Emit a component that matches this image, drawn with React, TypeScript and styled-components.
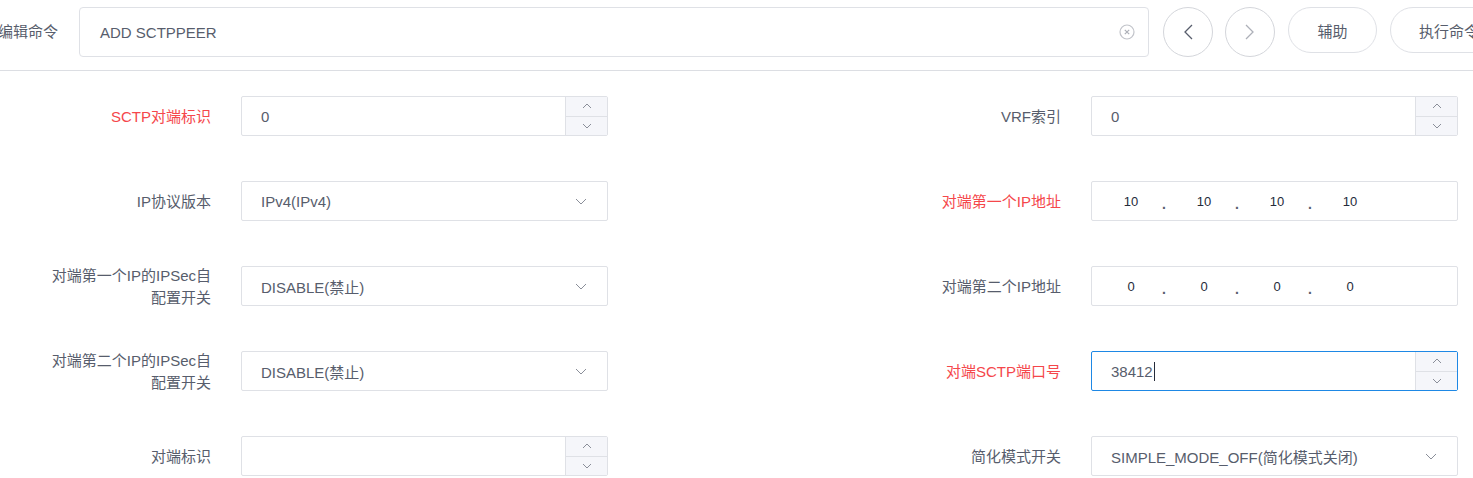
import React from 'react';
import styled, { createGlobalStyle } from 'styled-components';

const GlobalStyle = createGlobalStyle`
  body {
    margin: 0;
    background: #ffffff;
    font-family: "Liberation Sans", "Noto Sans CJK SC", sans-serif;
    color: #575d6c;
  }
`;

type FieldKind = 'number' | 'select' | 'ip';

interface FieldDef {
  label: string;
  required?: boolean;
  kind: FieldKind;
  value?: string;
  focused?: boolean;
}

const leftFields: FieldDef[] = [
  { label: 'SCTP对端标识', required: true, kind: 'number', value: '0' },
  { label: 'IP协议版本', kind: 'select', value: 'IPv4(IPv4)' },
  { label: '对端第一个IP的IPSec自配置开关', kind: 'select', value: 'DISABLE(禁止)' },
  { label: '对端第二个IP的IPSec自配置开关', kind: 'select', value: 'DISABLE(禁止)' },
  { label: '对端标识', kind: 'number', value: '' },
];

const rightFields: FieldDef[] = [
  { label: 'VRF索引', kind: 'number', value: '0' },
  { label: '对端第一个IP地址', required: true, kind: 'ip', value: '10.10.10.10' },
  { label: '对端第二个IP地址', kind: 'ip', value: '0.0.0.0' },
  { label: '对端SCTP端口号', required: true, kind: 'number', value: '38412', focused: true },
  { label: '简化模式开关', kind: 'select', value: 'SIMPLE_MODE_OFF(简化模式关闭)' },
];

const ChevronDown = () => (
  <svg width="12" height="7" viewBox="0 0 12 7" fill="none">
    <path d="M1 1L6 6L11 1" stroke="#8a8e99" strokeWidth="1" />
  </svg>
);

const SpinArrow = ({ up }: { up?: boolean }) => (
  <svg width="10" height="6" viewBox="0 0 10 6" fill="none">
    <path d={up ? 'M1 5L5 1L9 5' : 'M1 1L5 5L9 1'} stroke="#8a8e99" strokeWidth="1" />
  </svg>
);

const NavArrow = ({ left, color }: { left?: boolean; color: string }) => (
  <svg width="10" height="16" viewBox="0 0 10 16" fill="none">
    <path d={left ? 'M9 1L2 8L9 15' : 'M1 1L8 8L1 15'} stroke={color} strokeWidth="1.3" />
  </svg>
);

const ClearIcon = () => (
  <svg width="16" height="16" viewBox="0 0 16 16" fill="none">
    <circle cx="8" cy="8" r="7" stroke="#c2c4ca" strokeWidth="1.2" />
    <path d="M5.8 5.8L10.2 10.2M10.2 5.8L5.8 10.2" stroke="#adb0b8" strokeWidth="1.2" />
  </svg>
);

function renderControl(field: FieldDef) {
  if (field.kind === 'select') {
    return (
      <SelectBox>
        <ControlText>{field.value}</ControlText>
        <ChevronDown />
      </SelectBox>
    );
  }
  if (field.kind === 'ip') {
    const parts = (field.value || '').split('.');
    return (
      <IpBox>
        {parts.map((part, i) => (
          <React.Fragment key={i}>
            <Octet>{part}</Octet>
            {i < parts.length - 1 && <IpDot>.</IpDot>}
          </React.Fragment>
        ))}
      </IpBox>
    );
  }
  return (
    <NumberBox $focused={field.focused}>
      <ControlText>
        {field.value}
        {field.focused && <Caret />}
      </ControlText>
      <Spinner>
        <SpinButton>
          <SpinArrow up />
        </SpinButton>
        <SpinButton $lower>
          <SpinArrow />
        </SpinButton>
      </Spinner>
    </NumberBox>
  );
}

const App = () => (
  <>
    <GlobalStyle />
    <Page>
      <CommandBar>
        <BarLabel>编辑命令</BarLabel>
        <CommandInput>
          <CommandText>ADD SCTPPEER</CommandText>
          <ClearIcon />
        </CommandInput>
        <CircleButton type="button">
          <NavArrow left color="#575d6c" />
        </CircleButton>
        <CircleButton type="button">
          <NavArrow color="#adb0b8" />
        </CircleButton>
        <PillButton type="button" $width={89}>
          辅助
        </PillButton>
        <PillButton type="button" $width={118}>
          执行命令
        </PillButton>
      </CommandBar>
      <Form>
        {leftFields.map((field, i) => [field, rightFields[i]]).flat().map((field) => (
          <Field key={field.label}>
            <Label $required={field.required}>{field.label}</Label>
            {renderControl(field)}
          </Field>
        ))}
      </Form>
    </Page>
  </>
);

const Page = styled.div`
  width: 1473px;
  height: 478px;
  overflow: hidden;
`;

const CommandBar = styled.div`
  display: flex;
  align-items: flex-start;
  height: 63px;
  padding-top: 7px;
  margin-left: -2px;
  border-bottom: 1px solid #dcdee3;
`;

const BarLabel = styled.div`
  flex-shrink: 0;
  width: 60px;
  margin-right: 21px;
  font-size: 15px;
  line-height: 50px;
  color: #575d6c;
  white-space: nowrap;
`;

const CommandInput = styled.div`
  flex-shrink: 0;
  display: flex;
  align-items: center;
  width: 1070px;
  height: 50px;
  box-sizing: border-box;
  padding: 0 13px 0 20px;
  margin-right: 14px;
  border: 1px solid #dfe1e6;
  border-radius: 4px;
`;

const CommandText = styled.span`
  flex: 1;
  font-size: 15px;
  color: #575d6c;
`;

const CircleButton = styled.button`
  flex-shrink: 0;
  display: flex;
  align-items: center;
  justify-content: center;
  width: 50px;
  height: 50px;
  margin-right: 12px;
  padding: 0;
  border: 1px solid #d4d6db;
  border-radius: 50%;
  background: #ffffff;
`;

const PillButton = styled.button<{ $width: number }>`
  flex-shrink: 0;
  width: ${(p) => p.$width}px;
  height: 46px;
  margin-left: 1px;
  margin-right: 12px;
  padding: 0;
  border: 1px solid #dfe1e6;
  border-radius: 23px;
  background: #ffffff;
  font-family: "Liberation Sans", "Noto Sans CJK SC", sans-serif;
  font-size: 15px;
  color: #575d6c;
  white-space: nowrap;
`;

const Form = styled.div`
  display: grid;
  grid-template-columns: 608px 608px;
  justify-content: space-between;
  width: 1458px;
  padding-top: 25px;
  row-gap: 45px;
`;

const Field = styled.div`
  display: grid;
  grid-template-columns: 211px 367px;
  grid-template-rows: 40px;
  column-gap: 30px;
  align-items: center;
`;

const Label = styled.div<{ $required?: boolean }>`
  box-sizing: border-box;
  padding-left: 50px;
  padding-top: 2px;
  text-align: right;
  font-size: 15px;
  line-height: 22px;
  color: ${(p) => (p.$required ? '#f5474b' : '#575d6c')};
`;

const Box = styled.div`
  display: flex;
  align-items: center;
  height: 40px;
  box-sizing: border-box;
  border: 1px solid #dfe1e6;
  border-radius: 2px;
  background: #ffffff;
`;

const ControlText = styled.div`
  flex: 1;
  padding-left: 19px;
  font-size: 15px;
  color: #575d6c;
  white-space: nowrap;
`;

const SelectBox = styled(Box)`
  padding-right: 20px;
`;

const NumberBox = styled(Box)<{ $focused?: boolean }>`
  align-items: stretch;
  border-color: ${(p) => (p.$focused ? '#1e88e5' : '#dfe1e6')};

  ${ControlText} {
    display: flex;
    align-items: center;
  }
`;

const Caret = styled.span`
  display: inline-block;
  width: 1px;
  height: 19px;
  margin-left: 1px;
  background: #252b3a;
`;

const Spinner = styled.div`
  display: flex;
  flex-direction: column;
  width: 41px;
  border-left: 1px solid #dfe1e6;
  background: #f5f6fa;
`;

const SpinButton = styled.div<{ $lower?: boolean }>`
  flex: 1;
  display: flex;
  align-items: center;
  justify-content: center;
  border-top: ${(p) => (p.$lower ? '1px solid #dfe1e6' : 'none')};
`;

const IpBox = styled(Box)`
  padding-left: 14px;
`;

const Octet = styled.span`
  width: 50px;
  text-align: center;
  font-size: 13px;
  color: #252b3a;
`;

const IpDot = styled.span`
  width: 16px;
  margin-right: 7px;
  padding-top: 6px;
  text-align: center;
  font-size: 14px;
  font-weight: 700;
  color: #575d6c;
`;

export default App;
